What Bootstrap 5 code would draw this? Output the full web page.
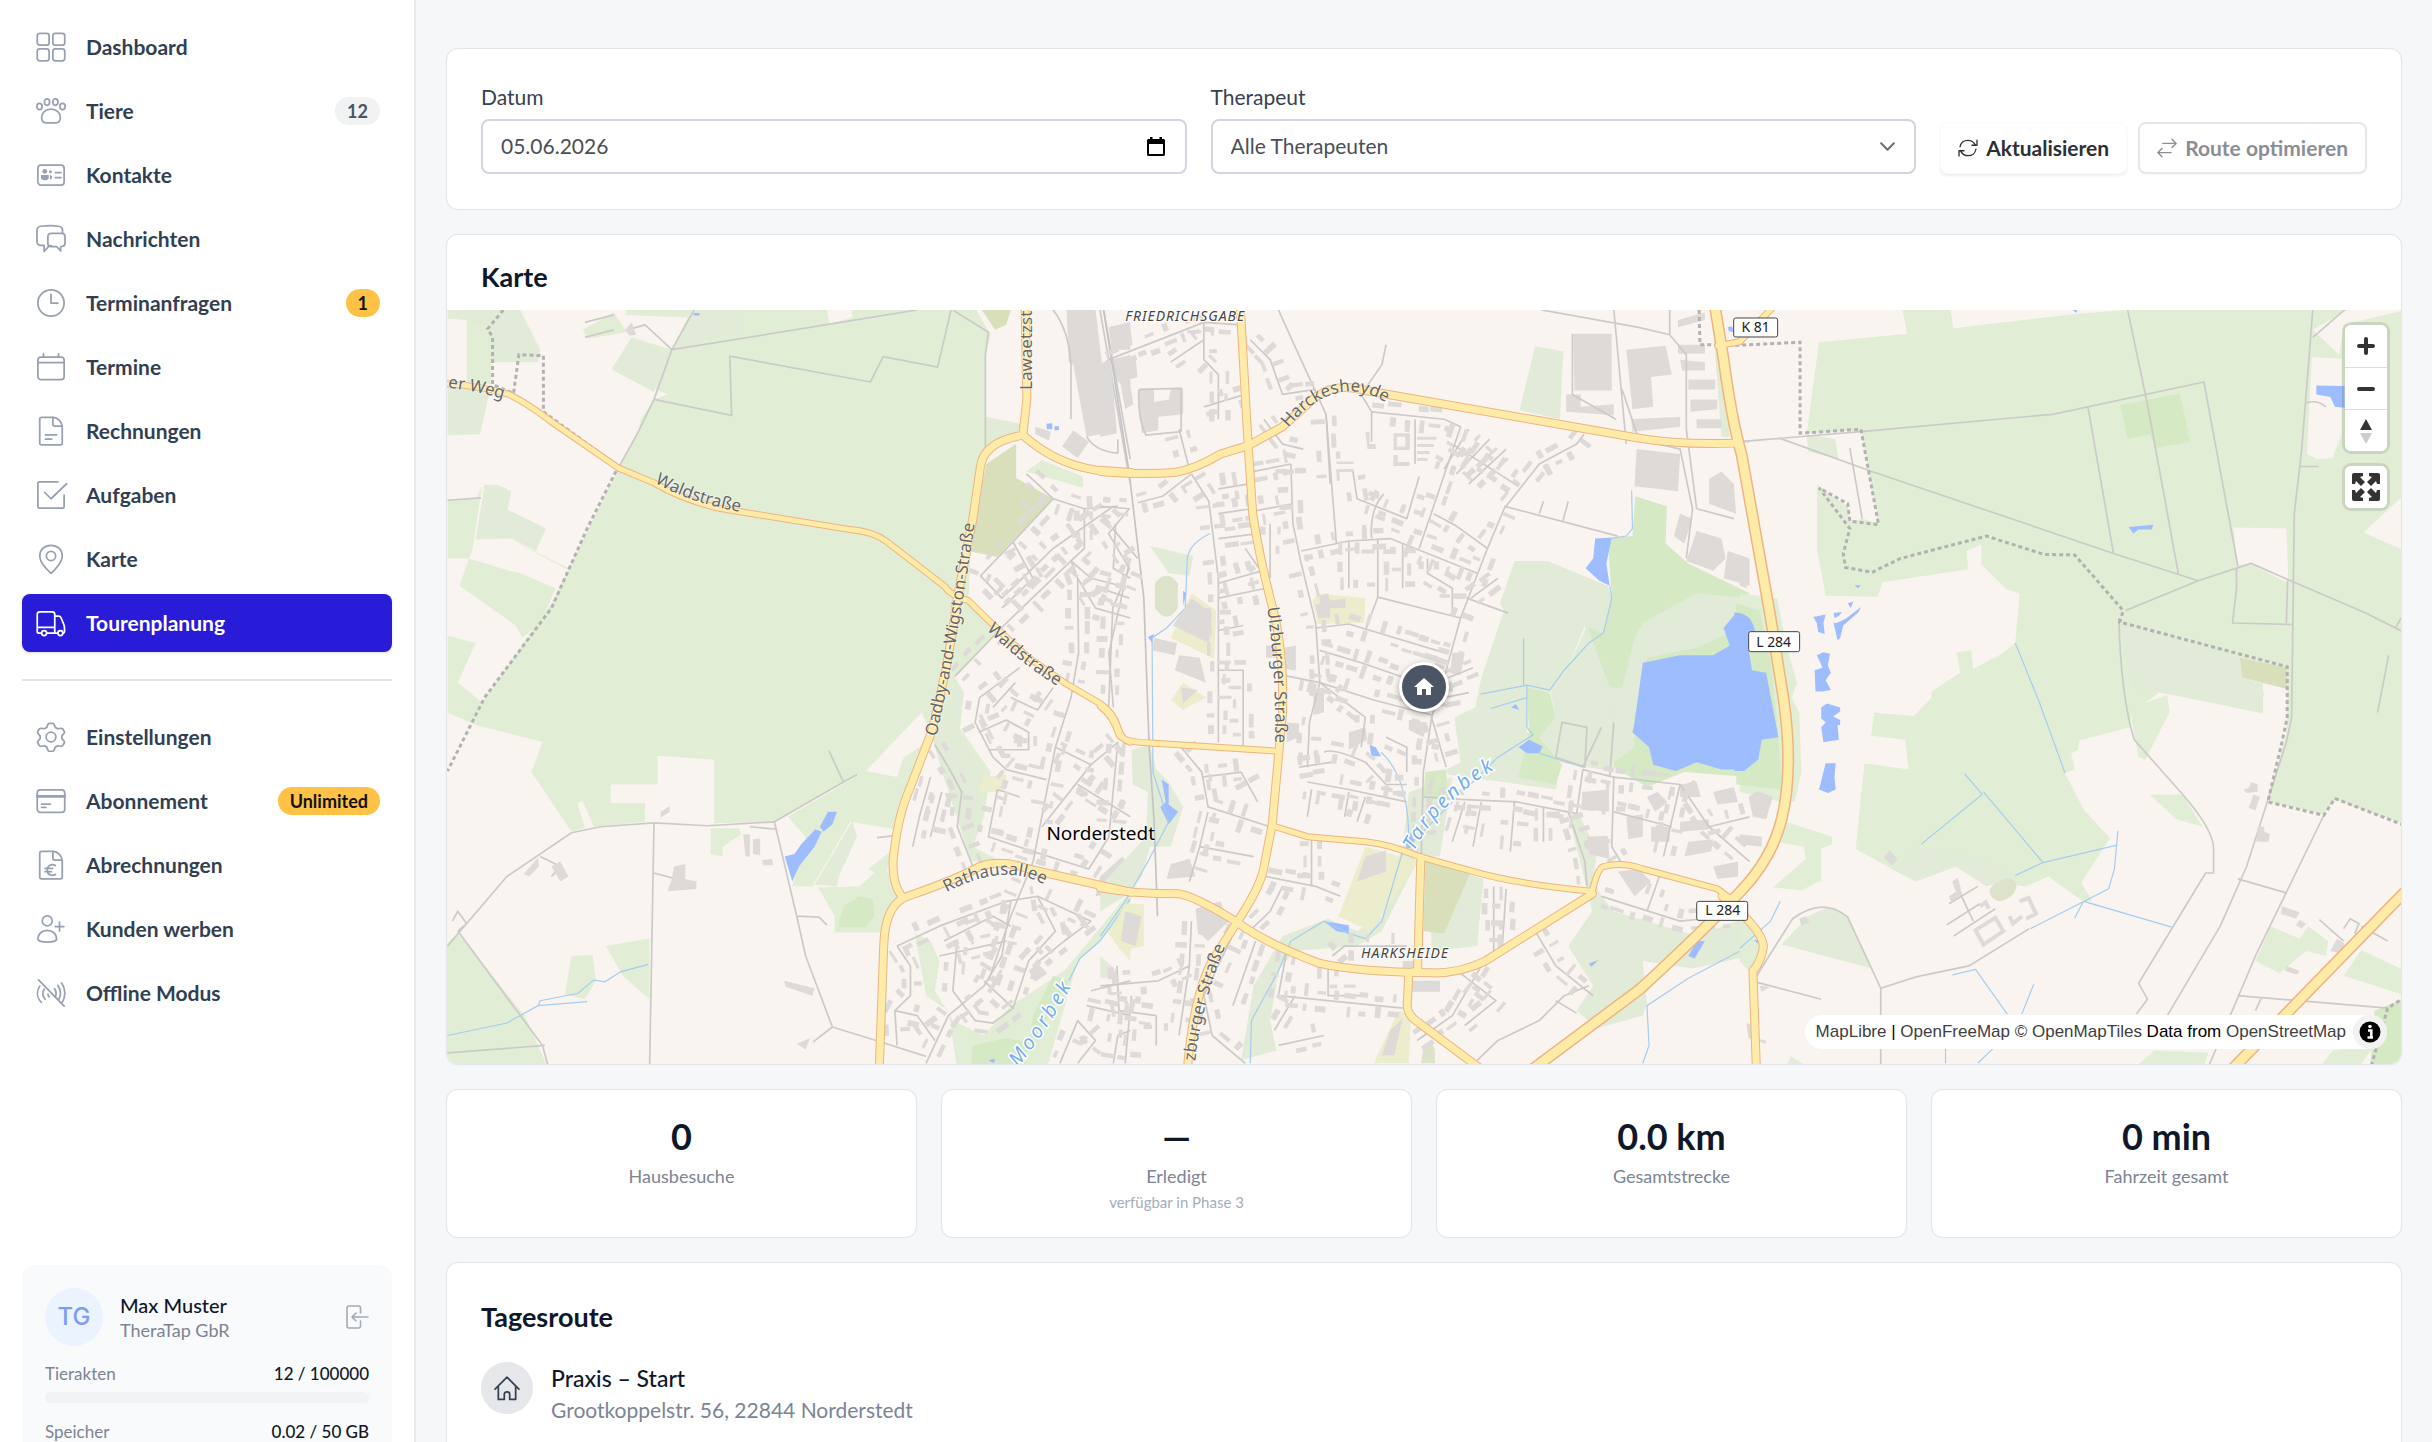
<!DOCTYPE html>
<html lang="de">
<head>
<meta charset="utf-8">
<meta name="viewport" content="width=device-width, initial-scale=1">
<title>Tourenplanung</title>
<link rel="stylesheet" href="https://cdn.jsdelivr.net/npm/bootstrap@5.3.0/dist/css/bootstrap.min.css">
<script src="https://cdn.jsdelivr.net/npm/bootstrap@5.3.0/dist/js/bootstrap.bundle.min.js"></script>
<style>
body{font-family:Lato,"Noto Sans",sans-serif;background:#f6f7f9;color:#0f172a;font-size:20px;line-height:28px}
.shell{height:100vh;overflow:hidden}
.side{width:416px;flex:none;background:#fff;border-right:2px solid #e5e7eb;padding:18px 22px 0;overflow:hidden}
.side-nav{gap:6px;flex:none}
.side-nav .nav-link{display:flex;align-items:center;height:58px;padding:0 12px 0 14px;border-radius:8px;color:#323f53;font-weight:700;font-size:21px}
.side-nav .nav-link svg{width:30px;height:30px;margin-right:20px;flex:none;color:#98a1b3}
.side-nav .nav-link.active{background:#281cd9;color:#fff;box-shadow:0 1px 3px rgba(0,0,0,.15)}
.side-nav .nav-link.active svg{color:#fff}
.ico{fill:none;stroke:currentColor;stroke-width:1.4;stroke-linecap:round;stroke-linejoin:round}
.ico-bold{stroke-width:1.6}
.pill{margin-left:auto;border-radius:14px;height:28px;line-height:28px;padding:0 12px;font-size:18px;font-weight:700;background:#f1f2f4;color:#4b5563}
.pill-amber{background:#ffc146;color:#111}
.side-rule{border-top:2px solid #e2e4e9;margin:27px 0;flex:none}
.usage{margin-top:243px;background:#f9fafb;border-radius:12px;padding:23px;flex:none}
.avatar{width:58px;height:58px;border-radius:50%;background:#ebf3ff;color:#7f9cf5;font:500 24px/58px Inter,sans-serif;text-align:center;margin-right:17px;flex:none}
.usage small{font-size:18px;line-height:24px;color:#7c8494}
.meter-row{font-size:17px;line-height:24px;color:#7c8494}
.who{font-size:20px;line-height:26px;font-weight:500;color:#0f172a}
.meter-row b{font-weight:500;color:#0f172a}
.meter{height:11px;border-radius:6px;background:#f2f3f5;margin:6px 0 17px}
.icon-btn{border:0;background:none;padding:0;line-height:0;color:#a3abb8}
.stage{padding:48px 30px 0;gap:24px;overflow:auto;scrollbar-width:none}
.stage>*{flex:none}
.stats{gap:24px}
.panel{background:#fff;border:1px solid #e4e6ec;border-radius:12px;box-shadow:0 0 1px #e4e6ec}
.panel h2{font-size:27px;line-height:32px;font-weight:700;margin:0}
.filters{padding:34px 34px 35px;gap:24px}
.filters label{font-size:21px;line-height:28px;margin-bottom:8px;display:block;color:#374151}
.filters .form-control,.filters .form-select{height:55px;border:2px solid #d1d5de;border-radius:8px;font-size:21px;padding:0 18px 2px;color:#4b4f57;background-color:#fff}
.filters .form-select{background-image:url("data:image/svg+xml,%3csvg xmlns='http://www.w3.org/2000/svg' viewBox='0 0 16 16'%3e%3cpath fill='none' stroke='%236b7280' stroke-width='2' stroke-linecap='round' stroke-linejoin='round' d='M2 5l6 6 6-6'/%3e%3c/svg%3e");background-size:17px 17px;background-position:right 18px center}
.date-btn{position:absolute;right:22px;top:18px;color:#000}
.acts{gap:11px}
.act{height:52px;border-radius:8px;font-size:21px;font-weight:700;color:#2d3036;background:#fff;padding:0 17px;border:1px solid #fbfbfb;box-shadow:0 2px 3px rgba(0,0,0,.07);display:flex;align-items:center;gap:8px}
.act-off,.act-off:disabled{border:2px solid #e5e7eb;color:#8a8e96;box-shadow:0 1px 2px rgba(0,0,0,.04);opacity:1}
.map-head{padding:26px 34px 17px}
.map-box{position:relative;border-radius:0 0 11px 11px;overflow:hidden}
.map-box>svg{display:block;width:100%;height:auto}
.ctl{position:absolute;right:14px;width:42px;border-radius:6px;background:#fff;box-shadow:0 0 0 3px rgba(0,0,0,.1);overflow:hidden}
.ctl-zoom{top:15px}.ctl-full{top:156px}
.ctl button{display:block;width:42px;height:42px;border:0;padding:0;background:#fff;line-height:0}
.ctl button+button{border-top:1px solid #ddd}
.credit{position:absolute;right:14px;bottom:15px;height:34px;border-radius:17px;background:#fff;padding-left:11px;font:17px/34px "Liberation Sans",Arial,sans-serif;color:#000}
.credit a{color:#404040;text-decoration:none}
.credit button{width:34px;height:34px;border-radius:50%;background:#f2f2f2;border:0;padding:0;line-height:0;margin-left:7px}
.home-pin{position:absolute;left:50%;top:50%;width:50px;height:50px;margin:-25px;border-radius:50%;background:#4b5565;border:3px solid #fff;box-shadow:0 2px 6px rgba(0,0,0,.35)}
.stat{padding:24px 24px 21px;height:149px}
.stat strong{display:block;font-size:36px;line-height:44px;font-weight:700}
.stat span{display:block;font-size:18px;line-height:24px;color:#7c8494;margin-top:6px}
.stat em{display:block;font-style:normal;font-size:15px;line-height:20px;color:#a5adba;margin-top:4px}
.route{padding:38px 34px 60px}
.stop{margin-top:29px}
.stop-ico{width:52px;height:52px;border-radius:50%;background:#e5e7eb;color:#374151;margin-right:18px}
.stop-name{font-size:23px;line-height:32px;font-weight:500}
.stop-addr{font-size:21px;line-height:32px;color:#7c8494}

/* map layers */
.tile path,.tile polygon{vector-effect:non-scaling-stroke}
.wood{fill:#e1eed5}.meadow{fill:#e1ebd7}.park{fill:#d5e9c5}.field{fill:#d9dfbb}.school{fill:#ecedcc}.pitch{fill:#dde2cb}.land{fill:#faf4f1}
.water{fill:#9ebdff}
.bld{fill:#dddad8}
.river{fill:none;stroke:#a5cdef;stroke-width:1.2}
.lane{fill:none;stroke:#cccac8;stroke-width:1.7;stroke-linejoin:round}
.border-line{fill:none;stroke:#b3b1b1;stroke-width:3;stroke-dasharray:4 3}
.case{--tone:#ecb480;--w:7px;--ww:9px;--wm:12px}
.core{--tone:#ffeba8;--w:5px;--ww:7px;--wm:9px}
.road path{fill:none;stroke:var(--tone);stroke-width:var(--w);stroke-linejoin:round;stroke-linecap:round}
.road .wide{stroke-width:var(--ww)}.road .major{stroke-width:var(--wm)}
.mt{font-family:"Noto Sans",sans-serif;fill:#666;stroke:rgba(255,255,255,.6);stroke-width:1.5;paint-order:stroke;font-size:17px}
.mt-river{fill:#74aeef;font-style:italic;font-size:20px;letter-spacing:3px;stroke:#fff;stroke-width:3}
.mt-area{fill:#444;font-style:italic;font-size:14px;letter-spacing:1px;stroke:#fff;stroke-width:2}
.mt-city{fill:#000;font-size:19px}
.sh rect{fill:#fff;stroke:#444;stroke-width:1}
.sh text{font-family:"Noto Sans",sans-serif;font-size:14px;fill:#222;text-anchor:middle}
</style>
</head>
<body>
<div class="shell d-flex">
<aside class="side d-flex flex-column">
<nav class="nav flex-column flex-nowrap side-nav">
<a class="nav-link" href="#"><svg class="ico" viewBox="0 0 24 24"><rect x="1" y="1" width="9.500" height="9.500" rx="2"/><rect x="13.500" y="1" width="9.500" height="9.500" rx="2"/><rect x="1" y="13.500" width="9.500" height="9.500" rx="2"/><rect x="13.500" y="13.500" width="9.500" height="9.500" rx="2"/></svg>Dashboard</a>
<a class="nav-link" href="#"><svg class="ico" viewBox="0 0 24 24"><ellipse cx="2.800" cy="8.300" rx="2.100" ry="2.500"/><ellipse cx="8.800" cy="4.800" rx="2.100" ry="2.600"/><ellipse cx="15.500" cy="4.800" rx="2.100" ry="2.600"/><ellipse cx="21.200" cy="8.300" rx="2.100" ry="2.500"/><path d="M12 10.500c4.500 0 7.500 3 7.500 6.800 0 2.600-1.500 4.200-4 4.200h-7c-2.500 0-4-1.600-4-4.200 0-3.800 3-6.800 7.500-6.800z"/></svg>Tiere<span class="pill">12</span></a>
<a class="nav-link" href="#"><svg class="ico" viewBox="0 0 24 24"><rect x="1.500" y="4" width="21" height="16" rx="2.500"/><g fill="currentColor" stroke="none"><circle cx="7" cy="9" r="1.900"/><path d="M4 12h6.200v2.200c0 1.300-1 2-3.100 2s-3.100-.7-3.100-2z"/><circle cx="11.500" cy="9.300" r="1.200"/><path d="M11.200 12c2 0 2.300 3.300 0 3.600z"/></g><path d="M15.500 10h4.500M15.500 14h4.500"/></svg>Kontakte</a>
<a class="nav-link" href="#"><svg class="ico" viewBox="0 0 24 24"><path d="M12.500 17.500H10.500L6.500 22v-5H4c-2 0-3.200-1-3.200-3V5c0-2 1.200-3 3.200-3.200 5-.6 10-.6 14 0 2 .2 3.200 1 3.200 3v2.500"/><path d="M12.500 7.500h8c1.700 0 2.700.9 2.700 2.500v5.500c0 1.500-1 2.300-2.700 2.500h-.8v3.500L16.500 18h-4.300c-1.700 0-2.700-.9-2.700-2.500V10c0-1.600 1.200-2.500 3-2.500z"/></svg>Nachrichten</a>
<a class="nav-link" href="#"><svg class="ico" viewBox="0 0 24 24"><circle cx="12" cy="12" r="10.500"/><path d="M12 5v7h5.500"/></svg>Terminanfragen<span class="pill pill-amber">1</span></a>
<a class="nav-link" href="#"><svg class="ico" viewBox="0 0 24 24"><rect x="1.500" y="4" width="21" height="18" rx="2.500"/><path d="M1.500 8.500h21M6 1.500V4M18 1.500V4"/></svg>Termine</a>
<a class="nav-link" href="#"><svg class="ico" viewBox="0 0 24 24"><path d="M13.500 1H4.500c-.9 0-1.500.6-1.500 1.500v19c0 .9.600 1.500 1.500 1.500h15c.9 0 1.500-.6 1.500-1.500V9C21 5 17.500 1 13.500 1z"/><path d="M13.500 1v5.500c0 1 .5 1.500 1.500 1.500h6M7.500 15h9M7.500 18.500h5"/></svg>Rechnungen</a>
<a class="nav-link" href="#"><svg class="ico overflow-visible" viewBox="0 0 24 24"><path d="M17.500 1.500H2.700c-.8 0-1.200.5-1.200 1.200v18.600c0 .8.500 1.200 1.200 1.200h18.600c.8 0 1.200-.5 1.200-1.200V12"/><path d="M7 10l5 5L24.500 3"/></svg>Aufgaben</a>
<a class="nav-link" href="#"><svg class="ico" viewBox="0 0 24 24"><path d="M12 23.500C9 21 3 14.500 3 9.500 3 4.500 7 1 12 1s9 3.500 9 8.500c0 5-6 11.500-9 14z"/><circle cx="12" cy="9.500" r="3.700"/></svg>Karte</a>
<a class="nav-link active" aria-current="page" href="#"><svg class="ico" viewBox="0 0 24 24"><path d="M4 20H2c-.7 0-1-.3-1-1V5c0-1.200.7-2 2-2h10c1.200 0 2 .8 2 2v15H9M15 6.500h3c1 0 1.600.4 2 1.300l2.200 5.200c.5 1.200.6 2 .6 3V19c0 .7-.3 1-1 1M1 15.500h14"/><circle cx="6.500" cy="20" r="2"/><circle cx="19.500" cy="20" r="2"/><path d="M15 20h2"/></svg>Tourenplanung</a>
</nav>
<div class="side-rule"></div>
<nav class="nav flex-column flex-nowrap side-nav">
<a class="nav-link" href="#"><svg class="ico" viewBox="0 0 24 24"><path d="M9.600 1.700c.3-.5.700-.7 1.200-.7h2.400c.5 0 .9.200 1.200.7l1 2.600 2 1.100 2.700-.4c.6 0 1 .2 1.300.6l1.200 2c.2.500.2 1-.1 1.400l-1.800 2.100v2.200l1.800 2.100c.3.400.3.900.1 1.400l-1.200 2c-.3.400-.7.600-1.300.6l-2.700-.4-2 1.100-1 2.600c-.3.500-.7.700-1.200.7h-2.400c-.5 0-.9-.2-1.200-.7l-1-2.600-2-1.100-2.700.4c-.6 0-1-.2-1.300-.6l-1.200-2c-.2-.5-.2-1 .1-1.400l1.800-2.100v-2.200L1.500 9c-.3-.4-.3-.9-.1-1.400l1.200-2c.3-.4.700-.6 1.300-.6l2.700.4 2-1.100z"/><circle cx="12" cy="12" r="3.900"/></svg>Einstellungen</a>
<a class="nav-link" href="#"><svg class="ico" viewBox="0 0 24 24"><rect x="1" y="3" width="22" height="18" rx="2.500"/><path d="M1 8.200h22" stroke-width="2.200"/><path d="M4.500 14.500h7M4.500 17h3.500"/></svg>Abonnement<span class="pill pill-amber">Unlimited</span></a>
<a class="nav-link" href="#"><svg class="ico" viewBox="0 0 24 24"><path d="M13.500 1H4.500c-.9 0-1.500.6-1.500 1.500v19c0 .9.600 1.500 1.500 1.500h15c.9 0 1.500-.6 1.500-1.500V9C21 5 17.500 1 13.500 1z"/><path d="M13.500 1v5.500c0 1 .5 1.500 1.500 1.500h6M15.500 12.500c-3-1.800-6.500-.3-6.500 3.500s3.500 5.300 6.500 3.500M7.300 14.700h6M7.300 17.300h5"/></svg>Abrechnungen</a>
<a class="nav-link" href="#"><svg class="ico" viewBox="0 0 24 24"><circle cx="9" cy="5.500" r="4"/><path d="M1.500 20c0-4 3.300-7 7.500-7s7.500 3 7.500 7c0 1.500-3.500 2.500-7.500 2.500S1.500 21.500 1.500 20zM18.800 6.500v7M15.300 10h7"/></svg>Kunden werben</a>
<a class="nav-link" href="#"><svg class="ico" viewBox="0 0 24 24"><path d="M2 1.500l20.500 21M3 6.500c-2.700 4-2.500 9 1.200 13M6.500 9c-1.500 2.700-1.200 5.700.8 8M9.500 13c.1.800.4 1.500 1 2M20.500 4c3.300 4.600 3.300 11 .5 15.500M17.500 6c2.500 3.500 2.600 7.500.8 11M14.800 8.500c1.400 2 1.600 4 .9 6"/></svg>Offline Modus</a>
</nav>
<section class="usage">
<div class="d-flex align-items-center">
<div class="avatar">TG</div>
<div class="flex-grow-1"><div class="who">Max Muster</div><small class="d-block">TheraTap GbR</small></div>
<button class="icon-btn" type="button" aria-label="Abmelden"><svg class="ico ico-bold" width="24" height="24" viewBox="0 0 24 24"><path d="M15.500 8V3c0-1.200-.8-2-2-2H4C2.800 1 2 1.800 2 3v18c0 1.200.8 2 2 2h9.500c1.200 0 2-.8 2-2v-5M23 12H7.500M11 8l-4 4 4 4"/></svg></button>
</div>
<div class="meter-row d-flex justify-content-between mt-3"><span>Tierakten</span><b>12 / 100000</b></div>
<div class="meter"></div>
<div class="meter-row d-flex justify-content-between"><span>Speicher</span><b>0.02 / 50 GB</b></div>
<div class="meter"></div>
</section>
</aside>

<main class="stage d-flex flex-column flex-grow-1">
<form class="panel filters d-flex align-items-end">
<div class="flex-fill w-50"><label for="datum">Datum</label><div class="position-relative"><input class="form-control" id="datum" type="text" value="05.06.2026"><button class="icon-btn date-btn" type="button" aria-label="Kalender"><svg width="18" height="19" viewBox="0 0 18 19"><path fill="currentColor" d="M3 0h2.500v2h7V0H15v2h1.500c.8 0 1.500.7 1.500 1.500v14c0 .8-.7 1.500-1.500 1.500h-15C.7 19 0 18.300 0 17.500v-14C0 2.700.7 2 1.500 2H3zM2 7v10h14V7z"/></svg></button></div></div>
<div class="flex-fill w-50"><label for="therapeut">Therapeut</label><select class="form-select" id="therapeut"><option>Alle Therapeuten</option></select></div>
<div class="acts d-flex flex-shrink-0">
<button class="act text-nowrap" type="button"><svg class="ico ico-bold" width="20" height="20" viewBox="0 0 24 24"><path d="M2.500 10.500C3.300 6 7 2.800 11.800 2.800c4 0 7.200 2 9 5.500M22.800 2.500v6.200h-6.100M21.500 13.500c-.8 4.500-4.500 7.700-9.300 7.700-4 0-7.200-2-9-5.500M1.200 21.500v-6.200h6.100"/></svg>Aktualisieren</button>
<button class="act act-off text-nowrap" type="button" disabled><svg class="ico ico-bold" width="20" height="20" viewBox="0 0 24 24"><path d="M7 6.500h16M18 1.500l5 5-5 5M17 17.500H1M6 12.500l-5 5 5 5"/></svg>Route optimieren</button>
</div>
</form>

<section class="panel">
<div class="map-head"><h2>Karte</h2></div>
<div class="map-box">
<svg viewBox="446 310 1956 755" role="img" aria-label="Karte von Norderstedt">
<defs>
<g id="roads" class="road">
<g class="tile" transform="translate(430 300) scale(.44643 .49745)">
<path d="M30 168Q110 172 175 190Q220 210 270 245L420 338 500 368Q560 400 640 418L720 430 940 462Q990 466 1020 485L1150 575Q1165 595 1205 605Q1290 680 1340 720L1420 770 1500 812Q1530 830 1540 860Q1548 885 1568 890"/>
<path class="wide" d="M1332 0L1336 200 1327 272Q1240 285 1232 335L1215 440 1180 600Q1160 740 1122 870L1075 980Q1045 1040 1036 1130Q1035 1180 1058 1202"/>
<path class="wide" d="M1327 272Q1400 330 1490 342L1570 347"/>
<path class="wide" d="M1005 1550L1015 1300Q1018 1210 1075 1198Q1180 1165 1230 1140Q1280 1125 1340 1145L1570 1192"/>
</g>
<g class="tile" transform="translate(1100 300) scale(.41454 .49745)">
<path d="M0 818Q30 835 45 875Q55 890 130 892L432 908M415 1058L500 1080 640 1090Q700 1095 770 1120L900 1150Q1000 1175 1188 1190Q1200 1145 1215 1140Q1260 1130 1310 1145L1490 1185 1530 1210"/>
<path class="wide" d="M774 1122L766 1350M745 1354L741 1420Q742 1440 770 1455L915 1545M745 1354L766 1350"/>
<path class="wide" d="M0 345Q100 352 180 347Q230 340 290 310L357 293 440 255 520 195Q570 165 640 182L1060 243 1300 278Q1400 292 1530 288M337 0L357 293 368 430Q380 500 410 600Q445 700 440 830L415 1055 393 1150Q380 1190 330 1252L270 1330Q225 1400 210 1550M0 1183Q80 1195 190 1195Q230 1200 330 1252Q400 1295 530 1335Q620 1352 800 1354Q870 1355 930 1330L1188 1195"/>
</g>
<g class="tile" transform="translate(1740 300) scale(.44130 .49745)">
<path d="M-50 92L0 84 75 15"/>
<path class="wide" d="M-40 1200Q50 1265 54 1300Q50 1330 30 1350L38 1550"/>
<path class="major" d="M1115 1550L1510 1190"/>
</g>
<path class="major" d="M1715 305L1724 360Q1732 420 1742 455L1771 618 1784 700Q1794 770 1782 820Q1772 860 1740 893Q1700 935 1640 990L1530 1072"/>
</g>
</defs>
<rect class="land" x="446" y="310" width="1956" height="755"/>

<!-- western sheet: fields, forest, Moorbek -->
<g class="tile" transform="translate(430 300) scale(.44643 .49745)">
<path class="wood" d="M440 0H1210L1255 70 1243 110V310L1232 335 1215 440 1205 600 1270 670 1175 760 1195 790 1185 860 1255 950 1240 1040 1215 1100 1280 1130 1210 1130 1150 960 1120 870 1100 830 975 948 870 1000 770 1050 635 1053V925L508 917V975H403V1012H480V1050L365 1060 340 1008 328 1012 345 1062 315 1070 225 950 250 890 100 855 115 810 270 610 420 340 465 265 470 240 500 200 530 190 405 140 450 75 540 100 575 35 437 30z"/>
<path class="meadow" d="M37 37L80 40 130 60 135 125H240L245 100 200 20H37zM450 75L540 115 500 185 405 140zM590 25L700 0 700 60 545 100zM120 372H150L180 385 172 422 258 460 235 505 180 480 100 482zM130 190L110 270 37 272V160zM1243 235L1327 250 1300 285 1243 305zM1160 850L1120 870 1150 960 1210 1110 1240 960 1185 870 1195 790 1175 760z"/>
<path class="wood" d="M80 40L135 62V170L80 165zM37 402L100 400 115 375 92 505 85 520H37zM85 520L175 545 200 550 280 580 245 650 205 680 190 655 64 575zM175 480L320 545 300 540zM37 675L100 690 60 770 115 810 100 855 37 830zM340 60L410 25 440 65 350 78zM627 1063H690L695 1075 655 1100 653 1120 627 1115zM800 1040L975 948 1045 960 1060 920 1095 900 1120 870 1075 980 1040 1065 940 1050 910 1180H810L840 1080zM868 1182L960 1180 1010 1140 1035 1160 1058 1202 1015 1240V1273H905V1240zM980 1145L1030 1110 1020 1165zM60 1275L210 1440 265 1550H30V1300zM315 1320L362 1318 370 1370 345 1407 300 1397zM392 1300L490 1285V1407L430 1360zM1085 1275L1120 1290 1140 1330 1130 1390 1170 1450 1240 1480 1300 1420 1420 1350 1568 1190V1230L1450 1330 1380 1550H1180L1160 1430 1110 1400zM1335 345L1370 322 1462 355V378z"/>
<path class="land" d="M885 0L893 48 945 35 940 0zM855 1180L940 1050 955 1090 895 1180z"/>
<path class="meadow" d="M860 1177L945 1048 955 1080 905 1178z"/>
<path class="park" d="M912 1262L925 1220 960 1200 990 1205 994 1240 975 1262zM1215 1500L1290 1485 1350 1495 1430 1370 1395 1360 1350 1440 1330 1550H1210z"/>
<path class="field" d="M1245 330L1312 290V358L1395 400 1270 517 1205 505zM1235 20H1300L1290 50 1265 60z"/>
<path class="school" d="M1235 960L1290 955 1285 990 1230 990zM1530 1270L1568 1220V1330L1540 1300z"/>
<path class="water" d="M872 1060L890 1030 910 1030 900 1055 880 1070zM793 1120L815 1115 830 1095 862 1065 876 1070 860 1100 825 1140 810 1170zM1380 249L1393 248 1393 260 1381 260zM1398 254H1408V262H1398zM588 26H602V31H590zM1250 1530L1265 1527 1262 1536z"/>
<path class="river" d="M37 1480L170 1455 240 1420 350 1412M240 1420L245 1410 330 1395 365 1368 390 1372 425 1352 487 1337M1568 1205L1500 1290 1455 1325 1430 1370"/>
<path class="lane" d="M590 20L540 100 500 200 465 265 420 338M540 100L1090 20M500 200L674 232 670 113 985 165 1014 114 1136 135 1166 20M1170 20L1250 65 1243 110V310M37 403L112 398M540 100L480 50 440 60M345 75L410 60M345 45L410 30M37 1300L170 1160 315 1072 380 1060 500 1052 620 1058 770 1050 925 970 955 955M925 970L892 907M500 1052L490 1550M500 1153L570 1170M60 1270L250 1500 265 1550M37 1515L255 1500M770 1050L820 1240 840 1320 900 1463 998 1490M820 1240L870 1242 888 1258M900 1463L857 1493M998 1490L1110 1522M245 1120L290 1140 270 1160M48 1250L60 1230 80 1255 60 1270M1000 1082L1040 1078M715 1060L775 1065"/>
<path class="border-line" d="M162 20L127 58 138 75V170L185 188 197 110 252 112V225L420 335 350 460 270 620 120 800 37 948"/>
<path class="bld" d="M1425 20H1490L1505 130 1532 265 1470 275 1440 130 1430 125zM1520 55L1568 45V100L1530 100zM1525 120L1568 110V170L1540 165zM1440 262L1475 285 1450 318 1415 295zM1355 255L1390 265 1385 282 1355 270zM270 1140L290 1130 308 1160 290 1170zM208 1155L240 1122 242 1140 220 1160zM545 1140L570 1135 570 1165 595 1170 595 1185 530 1190 540 1165zM722 1085L738 1083 738 1118 722 1115zM700 1075L715 1075 715 1120 705 1120zM742 1127L765 1125 767 1137 745 1138zM515 1030L535 1018 535 1030 515 1042zM792 1370L860 1385 855 1400 795 1382zM820 1497L850 1485 840 1508zM435 60L450 45 460 70 445 72zM1500 1160L1550 1120 1568 1140V1190L1490 1200zM1540 1250L1568 1240V1310L1545 1290zM1325 402L1338 408 1330 420 1320 412zM1340 1350L1360 1335 1382 1355 1355 1372z"/>
<g class="lane">
<path class="hs" d="M1395 400L1305 487 1232 555 1280 600 1395 500 1530 415"/><path class="hs" d="M1395 400L1360 370 1335 350M1395 400L1465 420 1540 415"/>
<path class="hs" d="M1465 420V500L1435 525 1450 560 1452 710 1435 800 1400 900 1350 1130 1300 1240 1250 1370"/>
<path class="hs" d="M1175 757L1290 650 1435 525 1480 560 1568 580"/><path class="hs" d="M1305 487L1350 560 1280 620"/><path class="hs" d="M1450 560L1490 620 1568 640"/>
<path class="hs" d="M1320 740L1230 800 1220 850 1260 920 1290 945 1380 965"/><path class="hs" d="M1228 870L1290 845 1340 870 1340 905 1250 905"/><path class="hs" d="M1260 820L1310 770"/><path class="hs" d="M1300 800L1360 825 1395 780"/>
<path class="hs" d="M1400 900L1480 935 1540 890M1480 935L1370 1060"/><path class="hs" d="M1450 975L1568 1040"/><path class="hs" d="M1540 890L1520 1080 1475 1145 1350 1110"/>
<path class="hs" d="M1130 895L1160 940 1190 990 1180 1060 1215 1140"/><path class="hs" d="M1120 960L1095 1040 1080 1100"/><path class="hs" d="M1145 990L1120 1080"/><path class="hs" d="M1270 985L1250 1080 1350 1110M1270 985L1320 1000"/>
<path class="hs" d="M1045 1300L1140 1260 1290 1210 1360 1200 1480 1250"/><path class="hs" d="M1150 1290L1260 1240 1300 1260M1140 1320L1290 1290"/><path class="hs" d="M1300 1210L1280 1320 1240 1380 1160 1440 1110 1536"/><path class="hs" d="M1240 1370L1305 1425 1260 1455 1220 1450 1170 1390 1180 1290"/><path class="hs" d="M1045 1300L1075 1340V1400L1040 1430 1045 1500"/><path class="hs" d="M1040 1430L1090 1440 1130 1490"/><path class="hs" d="M1360 1200L1400 1270 1340 1330 1305 1425"/><path class="hs" d="M1480 1250L1420 1290 1350 1340"/>
<path class="hs" d="M1410 1536L1450 1450 1490 1490 1450 1536"/><path class="hs" d="M1470 1420L1568 1440M1480 1390L1568 1370"/><path class="hs" d="M1530 1536L1540 1480 1568 1470"/>
<path d="M1395 20Q1430 60 1435 130L1435 240M1500 20L1568 370M1508 20L1568 320M1470 275Q1490 305 1540 308V280M1535 450L1530 540 1568 560M1568 520L1520 710 1530 820"/>
</g>
</g>

<!-- town sheet -->
<g class="tile" transform="translate(1100 300) scale(.41454 .49745)">
<path class="meadow" d="M1050 93L1118 103 1110 240 1012 222zM1080 525L1225 575 1235 600 1215 670 1170 655 1130 740 1087 790 1030 780 905 820 920 760 975 625 965 610 1000 525zM855 840L905 820 1030 780V870L1110 930 1100 985 840 955 835 945 870 930zM745 990L850 960 820 1120 770 1120 730 1100zM795 1125L925 1165 910 1300 800 1310zM1130 1035L1155 1035 1200 1110 1190 1165 1210 1200 1240 1230 1440 1280 1568 1240V1320L1430 1345 1310 1330 1320 1420 1150 1430 1190 1380 1130 1300 1188 1230zM1240 1410L1320 1415 1310 1440 1200 1465 1150 1430zM75 905L120 895 135 945 165 970 200 1020 170 1100 120 1100 100 1160 60 1200 0 1230V1320L40 1350 25 1365H0V1180L110 1080 115 990 78 975zM120 495L225 515 215 555 165 550zM440 1280L550 1245 620 1270 680 1240 700 1165 730 1100 765 1130 680 1270 620 1300 470 1310 430 1350 410 1450 425 1510 340 1530 370 1380z"/>
<path class="park" d="M1292 395L1368 415 1365 490 1420 530 1568 590V960L1410 950 1320 980 1240 940 1225 780 1170 655 1215 670 1235 600 1225 480 1285 475zM1030 780L1085 790 1100 840 1060 880 1115 935 1100 975 1010 960 1035 870zM785 950L835 945 840 1000H780z"/>
<path class="meadow" d="M1568 600V650L1440 700 1320 720 1290 840 1290 900 1240 930 1230 780 1260 780 1290 680 1310 650 1440 590zM1087 790L1130 740 1175 655 1230 780 1240 950 1110 930 1060 880 1100 840zM1480 60L1500 110 1520 275H1500z"/>
<path class="field" d="M785 1130L895 1150 830 1275 780 1270z"/>
<path class="school" d="M525 590L640 600 637 650 525 652 513 605zM220 590L280 625 275 722 170 680zM200 770L255 800 200 825 170 805zM640 1100L770 1130 650 1270 575 1240zM60 1215L105 1215V1300L50 1310 20 1275zM720 1430L750 1440 745 1536H660z"/>
<path class="pitch" d="M132 570Q160 540 187 570V620Q160 655 132 620zM780 1500Q800 1485 808 1510V1536H775z"/>
<path class="water" d="M1195 480L1235 478 1222 530 1230 575 1205 565 1172 540 1190 520zM1568 630L1530 635 1505 660 1520 695 1480 715 1400 715 1310 730 1290 850 1285 870 1325 900 1335 935 1390 948 1440 930 1500 945 1568 945zM1010 900L1035 885 1068 898 1060 912 1030 912zM650 895L665 900 678 918 655 918zM148 965L165 975 165 1015 188 1030 165 1055 145 1020 158 1010zM540 1250L600 1258 600 1275 570 1270zM1420 1320L1440 1290 1460 1290 1435 1325zM1180 1335L1203 1328 1185 1342zM115 678L130 672 125 690zM200 585L208 590 200 615zM740 1080L765 1060 755 1100 738 1105zM992 820L1003 813 1012 825zM1515 55L1525 53 1530 65 1518 63z"/>
<path class="river" d="M265 470Q215 490 210 520L205 620 160 660 125 680 127 950 165 1050 115 1130 60 1210 0 1280M1283 383L1285 460 1270 475 1230 480M1230 575L1235 600 1215 670 1180 690 1120 745 1085 785 1030 775 918 793M1030 775V860L1045 875 960 920 730 1110 680 1250 640 1285 600 1275 540 1250 460 1290 430 1350 365 1450 362 1536M1060 912L1165 940M678 910Q745 960 745 1090M943 822L1030 800M1022 680V775M1568 1300L1420 1365 1320 1420 1325 1500 1310 1536"/>
<path class="bld" d="M0 130L25 115 40 268 0 275zM20 55L70 45 78 90 28 105zM38 120L85 115 90 155 70 160 80 210 60 220zM92 180L130 178V205L165 200 170 180 200 178V230L140 235V262L100 268zM1142 68H1235V182H1145zM1270 100L1365 92 1380 150 1330 155 1335 215 1285 220zM1125 190H1160V215L1240 210V232L1125 225zM1282 240L1400 235V255L1285 265zM1295 300L1400 310 1395 385 1290 375zM1395 40L1460 25V40L1395 55zM1395 90H1460V108H1395zM1400 120L1460 125V142H1405zM1420 160H1485V180H1420zM1425 200H1490V220L1425 225zM1440 240H1500V258H1440zM1470 360L1500 345 1530 370 1535 430 1470 410zM1400 430L1430 440 1410 490 1385 475zM1440 465L1500 480 1510 520 1480 545 1415 525zM1515 505L1568 520V575L1505 560zM530 595L550 590 555 605 592 600V620H555V640H530zM220 600L270 630 262 690 175 655zM130 680L185 690 180 715 125 705zM190 715L240 720 255 770 180 745zM195 780L235 785 200 812zM445 700L472 695V740H450zM400 695H430V720H400zM450 850L480 852V880L450 890zM640 1120L690 1108V1150L620 1170zM170 1135L215 1125 230 1160 160 1165zM1165 990L1228 985V1030L1160 1025zM1175 1080L1225 1078 1230 1125 1180 1115zM1270 1040L1310 1035V1080L1275 1085zM1330 1060H1375V1090H1330zM1400 975L1440 970 1450 1000H1400zM1480 990L1530 980 1540 1010 1490 1015zM1320 1000L1345 990 1370 1010 1340 1030zM1400 1050L1470 1045V1065L1400 1070zM1420 1090L1480 1085 1475 1110 1410 1120zM1250 1150L1300 1145 1330 1170 1290 1200zM730 1330H765V1350H730zM600 870L640 860 645 885 600 905zM745 845L790 850 780 880 745 865zM515 785L540 780V830L515 835zM850 710H880L870 755 845 750zM1480 1140L1540 1130V1160L1490 1165zM60 1230L100 1240 85 1300 50 1290zM230 1225L290 1210 310 1250 260 1290 235 1270zM700 1470L730 1445 710 1520 680 1520zM750 1370H820V1392H750z"/>
<path class="bld" fill-rule="evenodd" d="M708 268H747V302H708zM716 275V295H739V275zM708 312H718V326H747V334H708zM765 275H812V281H765zM765 290H805V296H765zM765 304H795V310H765zM765 318H790V324H765zM640 265H650V290H665V300H645zM570 325H612V330H570zM570 340H612V346H570z"/>
<g class="lane">
<path class="hs" d="M250 20V120L285 150V240"/><path class="hs" d="M20 120L250 45 340 50"/><path class="hs" d="M250 80L170 125"/><path class="hs" d="M250 215L350 190M362 80L410 120 440 190 520 180"/><path d="M430 20L490 130 545 230 570 490M93 180Q90 240 110 272L195 265M95 180L195 178V265M690 90L680 130 630 190 655 225V285"/><path class="hs" d="M395 240L440 290 490 300"/>
<path class="hs" d="M545 230L555 370"/><path class="hs" d="M655 225L830 240 870 255 770 500"/><path class="hs" d="M760 240V330"/><path class="hs" d="M610 345L620 400 740 440 770 355"/><path class="hs" d="M655 480Q650 420 685 390M600 485V580M670 480V600"/><path class="hs" d="M460 330L465 450 485 530 520 650 530 770"/><path class="hs" d="M370 345L460 330M370 425L465 410"/>
<path class="hs" d="M485 505L600 485 700 480 910 550"/><path class="hs" d="M730 490V580"/><path class="hs" d="M790 520V550L850 580V630"/><path class="hs" d="M850 290L1010 375"/><path class="hs" d="M830 340L890 260M860 350L940 280M890 370L980 300"/><path class="hs" d="M805 430L860 455 935 500"/>
<path class="hs" d="M1168 270L1150 290 1060 330 975 420 930 510 870 640 830 760 800 840"/><path d="M975 415L1250 475M1070 405L1060 430M1130 405L1117 445M885 600L985 630M670 598L870 640M670 598L640 665M905 635"/><path class="hs" d="M895 600L960 560"/>
<path class="hs" d="M520 660L600 652 840 712"/><path class="hs" d="M530 705L630 730 735 760"/><path class="hs" d="M440 755L530 770 660 805 800 835"/><path class="hs" d="M530 770L505 850 500 940"/><path class="hs" d="M530 770L640 840 630 900"/><path class="hs" d="M840 760L900 740M830 800L890 790"/>
<path class="hs" d="M220 350L262 405 285 560V890"/><path class="hs" d="M285 380L360 370M285 430L365 420M285 480L380 470"/><path class="hs" d="M285 570L390 545M285 600L400 580"/><path class="hs" d="M285 745H345V900M285 665L345 655"/><path class="hs" d="M90 408L150 395 220 350"/><path class="hs" d="M190 260L215 340"/>
<path class="hs" d="M480 940L560 930M500 970L600 985 740 1010"/><path class="hs" d="M510 985L500 1040M600 990L590 1040M640 1000L620 1050M540 910Q560 900 640 930L690 975 740 975M690 880L740 900 740 950"/>
<path class="hs" d="M780 1000L870 1005 1005 1010 1160 1035"/><path class="hs" d="M880 1010L850 1090M920 1010L900 1100M1000 1010L990 1110M1070 1020V1090"/><path class="hs" d="M775 1120L780 950 800 840 835 940"/><path class="hs" d="M1130 1030L1170 1130 1175 1180"/><path class="hs" d="M1150 1035L1165 945 1240 960 1235 1100 1260 1135"/><path class="hs" d="M1240 960L1400 975 1360 1120"/><path class="hs" d="M1400 975L1470 1060 1568 1130"/><path class="hs" d="M1240 1030L1380 1060M1470 1060L1568 1040"/>
<path class="hs" d="M195 900L245 950 260 1020 410 1060"/><path class="hs" d="M245 960L340 950M340 950L380 1010"/><path class="hs" d="M260 1030L240 1100 215 1170"/><path class="hs" d="M240 1100L370 1120"/><path class="hs" d="M510 1080V1180M400 1160L520 1180 580 1200"/><path class="hs" d="M440 1180L410 1230 360 1270"/>
<path class="hs" d="M330 1260L250 1400 270 1480 350 1536"/><path class="hs" d="M375 1290L320 1420"/><path class="hs" d="M450 1310L430 1400 550 1410 730 1425"/><path class="hs" d="M550 1340V1400L640 1400"/><path class="hs" d="M560 1320L590 1300 740 1300"/><path class="hs" d="M220 1250L215 1340 140 1370 0 1380"/><path class="hs" d="M40 1340L45 1430 135 1440M75 1400L60 1536M135 1440V1500"/><path class="hs" d="M215 1340L190 1480"/>
<path class="hs" d="M765 1490L850 1440 920 1340M870 1355L955 1410 880 1460"/><path class="hs" d="M950 1180V1320M980 1185L970 1310"/><path class="hs" d="M1050 1270L1100 1340 1190 1400"/><path d="M910 1530L960 1490 1060 1450 1120 1400 1180 1380M1100 1410L1150 1435"/><path class="hs" d="M1210 1200L1400 1250 1520 1240M1350 1160L1320 1230"/>
<path class="hs" d="M0 415L70 420 20 470 70 540 30 620 20 820"/><path class="hs" d="M0 580L70 600M30 460L90 520"/><path class="hs" d="M410 450V560M350 500L400 560"/><path class="hs" d="M430 1500L540 1480M470 1400L420 1470"/>
<path d="M1065 20L1300 55 1375 70M1140 68V190L1245 240M1240 20L1270 290M1375 20V70L1415 110V260L1440 420M1260 180L1300 280 1400 300 1430 420 1415 520M1440 420L1530 440M1535 285H1568M1240 850L1230 960M1115 850L1175 860 1170 940 1100 920zM1210 860L1165 940"/>
<path d="M8 20L70 350 105 600 118 900 130 1050 138 1240" stroke="#c4c4c4"/>
</g>
</g>

<!-- eastern sheet: forests and farmland -->
<g class="tile" transform="translate(1740 300) scale(.44130 .49745)">
<path class="wood" d="M180 85L380 68 365 0H475L485 57 760 28 880 20H1510V1055L1350 1005 1325 1035 1200 1010 1240 870 1242 740 1135 720 1140 760 1190 790 1180 830 960 785 890 830 885 860 770 887 768 905 752 912 760 945 738 952 780 1025 840 1083 775 1172 800 1210 775 1208 700 1160 650 1180 560 1170 490 1140 400 1170 345 1145 263 1105 283 932 383 945 375 885 298 877 305 830 395 837 435 800V788L500 750 492 710 525 705 530 742 595 712 625 690 635 590 605 582 548 532V492L515 505 518 542 325 568 312 597 195 595 175 500V370L280 440 315 450 275 262 152 268z"/>
<path class="wood" d="M930 995H1005L1050 1060 990 1045zM890 850L890 820 970 795 975 830 920 925 905 920zM105 1050L210 1080 210 1095 185 1105V1168L140 1188 75 1182 150 1125 145 1100 80 1090zM0 590L85 600 105 690 130 770 118 800 135 830 140 950 125 1010 95 1010 0 990zM1205 1260L1270 1285 1290 1260 1335 1290 1330 1320 1285 1310 1225 1355 1170 1330zM1410 1308L1510 1350V1400L1370 1360zM940 1510L1063 1515 1050 1550H890zM1345 1510L1440 1500 1400 1550H1310zM0 1240L55 1300 25 1355 0 1330zM115 1522L170 1550H105z"/>
<path class="meadow" d="M155 1240L200 1222 245 1240 300 1345 95 1297zM860 650L1140 715 1140 760 1187 772V832L1010 800 890 780zM152 270L220 280 225 320 155 305zM400 1100L500 1110 640 1160 560 1180 490 1140 400 1170 345 1145z"/>
<path class="park" d="M863 212L998 188 1022 285 945 298 930 270 880 280zM-8 610L45 625 70 720 88 880 95 985 -8 975zM1440 1430L1510 1405V1550H1430z"/>
<path class="field" d="M1135 720L1242 740V783L1140 760z"/>
<path class="pitch" d="M567 1190Q570 1172 610 1163 628 1165 628 1182 620 1205 590 1210 570 1208 567 1190z"/>
<path class="land" d="M217 280L275 265 310 435 250 445 245 410 180 375 230 350zM1120 458L1240 460 1245 570 1155 530 1130 535zM1298 115L1365 118V270L1345 318 1310 320 1287 310zM1415 468L1510 390V505zM1510 20H1380L1300 60 1360 110 1370 50z"/>
<path class="water" d="M-12 629L0 630Q30 635 35 670L20 700 28 745 60 750 88 880 50 885 42 925 10 948 -12 948zM167 638L195 633 190 650 193 672 178 668 175 650zM213 630L232 628 225 636 215 640zM220 650L240 642 275 618 270 628 235 655 228 680 222 685 213 650zM245 610L258 607 252 620zM261 574H275L268 580zM175 715L190 709 205 712 200 735 207 750 195 765 207 785 188 788H172L170 745 188 740zM185 820L198 812 228 820V828L212 838 228 845V855H222L225 885 190 890 185 860 195 850 185 842zM195 932H218L215 960 218 985 200 992 180 985zM1308 172L1372 173V217L1350 215 1340 195 1308 190zM882 457L938 452 935 462 905 462 893 470zM755 20H765V26zM33 1288H43L40 1295z"/>
<path class="river" d="M625 690L680 810 738 952M510 953L550 995 412 1095M553 990L688 1132 625 1158M688 1132L856 1097M858 1068L850 1145 837 1185 660 1265M760 1243L780 1210 980 1262M483 1358L535 1347 607 1437M667 1377L640 1437M467 1536V1500M540 1536L575 1506M92 1210L70 1250 0 1305"/>
<path class="lane" d="M0 285L275 265 710 230 1053 165 1130 535M880 20L925 210 995 550M790 215L848 510M90 278L300 345 848 510 1040 565 1160 530 1250 565 1420 630 1510 670M875 625L1040 565M860 640Q865 800 895 885L1000 990Q1080 1070 1075 1110V1153H1057L905 1375 925 1407 900 1437M1127 540V580L1118 650 1252 653M1243 565L1240 650M1300 20L1275 300 1258 430 1252 840 1240 890 1150 1140 1090 1260 970 1440M1300 75L1372 20M1285 207Q1310 200 1330 215M1270 335H1313M1472 715L1447 830M1325 1037L1170 1320 1060 1550M1130 1165L1240 1193M1130 1400L1470 1425M1183 1405L1170 1430M35 1365L120 1245Q190 1200 245 1242L320 1385V1550M320 1385L400 1362 520 1340 657 1265M35 1372L185 1407M250 298L278 440M1315 1247L1370 1290M1500 640L1488 660M475 1215L540 1180M470 1257L545 1215M485 1280L580 1225M490 1175L530 1250M1370 1265L1385 1245 1405 1255 1395 1275M1410 1260L1470 1290"/>
<path class="border-line" d="M-92 20L-90 90 0 91 137 85V268L275 260 315 452 250 445 245 410 180 378 250 460 235 510 240 538 300 548 365 520 560 475 690 512 760 513 870 625 862 648 1242 738V840L1230 890 1198 1010 1325 1037 1350 1003 1510 1058"/>
<path class="border-line" d="M1510 1402L1470 1425 1430 1550"/>
<path class="bld" d="M340 1107L358 1125 345 1138 327 1122zM482 1170L495 1162 502 1185 490 1190zM475 1200L500 1185 505 1195 480 1212zM1160 970L1175 975V990L1150 992 1143 985 1155 982zM1165 995L1180 1000 1170 1027 1155 1022zM1175 1060H1190V1070L1203 1075 1200 1090H1172zM1230 1220L1270 1232 1262 1245 1228 1235zM1270 1247L1285 1255 1275 1265 1262 1258zM1355 1285L1372 1295 1365 1315 1340 1310zM1240 1340L1270 1350 1265 1358 1236 1350zM15 1455L30 1460V1485L60 1490V1497L20 1485zM45 1380L70 1382 50 1392zM20 1000L40 988 75 1000 60 1045 30 1040zM0 1075L50 1080V1100L0 1095zM135 1245L150 1240 158 1252 140 1258zM0 510L20 560 15 580 0 575z"/>
<path d="M535 1268L580 1243 598 1270 553 1297zM635 1210L655 1203 672 1235 650 1245M612 1240L620 1255 640 1240M545 1220L558 1212 565 1225" fill="none" stroke="#dddad8" stroke-width="4"/>
</g>
<g id="houses" class="bld"></g>
<use href="#roads" class="case"/><use href="#roads" class="core"/>

<g fill="none">
<path id="p-weg" d="M447 388Q472 390 506 400"/><path id="p-wald1" d="M654 483Q690 504 750 514"/><path id="p-oadby" d="M936 737Q958 640 974 524"/>
<path id="p-wald2" d="M986 630Q1025 668 1060 688"/><path id="p-rath" d="M946 893Q1000 864 1040 883"/><path id="p-moor" d="M1018 1068Q1048 1030 1078 975"/>
<path id="p-hark" d="M1288 428Q1335 372 1385 402"/><path id="p-ulz" d="M1267 608Q1276 670 1275 745"/><path id="p-ulz2" d="M1195 1062Q1201 1005 1226 945"/>
<path id="p-tarp" d="M1414 852Q1440 800 1506 763"/>
</g>
<g class="mt">
<text><textPath href="#p-weg">er Weg</textPath></text>
<text><textPath href="#p-wald1">Waldstraße</textPath></text>
<text><textPath href="#p-oadby">Oadby-and-Wigston-Straße</textPath></text>
<text><textPath href="#p-wald2">Waldstraße</textPath></text>
<text><textPath href="#p-rath">Rathausallee</textPath></text>
<text><textPath href="#p-hark">Harckesheyde</textPath></text>
<text><textPath href="#p-ulz">Ulzburger Straße</textPath></text>
<text><textPath href="#p-ulz2">zburger Straße</textPath></text>
<text transform="translate(1032 390) rotate(-90)">Lawaetzst</text>
</g>
<text class="mt mt-river"><textPath href="#p-moor">Moorbek</textPath></text>
<text class="mt mt-river"><textPath href="#p-tarp">Tarpenbek</textPath></text>
<text class="mt mt-area" x="1125" y="321">FRIEDRICHSGABE</text>
<text class="mt mt-area" x="1361" y="959">HARKSHEIDE</text>
<text class="mt mt-city" x="1046" y="841">Norderstedt</text>
<g class="sh"><rect x="1734" y="318" width="44" height="19" rx="2"/><text x="1756" y="332">K 81</text><rect x="1749" y="632" width="51" height="20" rx="2"/><text x="1774" y="647">L 284</text><rect x="1697" y="902" width="51" height="19" rx="2"/><text x="1723" y="916">L 284</text></g>
</svg>
<div class="home-pin d-flex align-items-center justify-content-center"><svg width="24" height="24" viewBox="0 0 24 24" fill="#fff"><path d="M10 20v-6h4v6h5v-8h3L12 3 2 12h3v8z"/></svg></div>
<div class="ctl ctl-zoom">
<button type="button" aria-label="Vergrößern"><svg width="42" height="42" viewBox="0 0 42 42"><path d="M21 14v14M14 21h14" stroke="#333" stroke-width="4" stroke-linecap="round"/></svg></button>
<button type="button" aria-label="Verkleinern"><svg width="42" height="42" viewBox="0 0 42 42"><path d="M14 21h14" stroke="#333" stroke-width="4" stroke-linecap="round"/></svg></button>
<button type="button" aria-label="Nach Norden ausrichten"><svg width="42" height="42" viewBox="0 0 42 42"><path fill="#333" d="M15 20l6-11 6 11z"/><path fill="#ccc" d="M15 23l6 11 6-11z"/></svg></button>
</div>
<div class="ctl ctl-full"><button type="button" aria-label="Vollbild"><svg width="42" height="42" viewBox="0 0 42 42"><g id="fs"><path id="fa" fill="#333" d="M7 9q0-2 2-2h9v3l-3 1 5 5-4 4-5-5-1 3H7z"/><use href="#fa" transform="matrix(-1 0 0 1 42 0)"/></g><use href="#fs" transform="matrix(1 0 0 -1 0 42)"/></svg></button></div>
<div class="credit d-flex align-items-center"><span><a href="#">MapLibre</a> | <a href="#">OpenFreeMap</a> <a href="#">© OpenMapTiles</a> Data from <a href="#">OpenStreetMap</a></span><button type="button" aria-label="Quellenangaben"><svg width="34" height="34" viewBox="0 0 34 34"><circle cx="17" cy="17" r="10.500"/><path d="M15 15.500h3.300v6.500M14.500 22.500h5.500" stroke="#fff" stroke-width="2.500" fill="none"/><circle cx="17" cy="11.500" r="1.800" fill="#fff"/></svg></button></div>
</div>
</section>

<section class="stats d-flex">
<div class="panel stat flex-fill w-25 text-center"><strong>0</strong><span>Hausbesuche</span></div>
<div class="panel stat flex-fill w-25 text-center"><strong>—</strong><span>Erledigt</span><em>verfügbar in Phase 3</em></div>
<div class="panel stat flex-fill w-25 text-center"><strong>0.0 km</strong><span>Gesamtstrecke</span></div>
<div class="panel stat flex-fill w-25 text-center"><strong>0 min</strong><span>Fahrzeit gesamt</span></div>
</section>

<section class="panel route">
<h2>Tagesroute</h2>
<div class="stop d-flex align-items-start">
<div class="stop-ico d-flex align-items-center justify-content-center"><svg class="ico ico-bold" width="26" height="26" viewBox="0 0 24 24"><path d="M1 13L12 2l11 11M4 10.500V22.500h5.500V18c0-1.500 1-2.500 2.500-2.500s2.500 1 2.500 2.500v4.500H20V10.500"/></svg></div>
<div><div class="stop-name">Praxis – Start</div><div class="stop-addr">Grootkoppelstr. 56, 22844 Norderstedt</div></div>
</div>
</section>
</main>
</div>
<script>
// House footprints: small blocks on both sides of every residential lane.
(function(){
  var seed=7;function rnd(){seed=(seed*16807)%2147483647;return seed/2147483647}
  var out='';
  document.querySelectorAll('path.hs').forEach(function(p){
    var m=p.closest('.tile').transform.baseVal.consolidate().matrix;
    function at(d){var q=p.getPointAtLength(d);return[q.x*m.a+m.e,q.y*m.d+m.f]}
    var len=p.getTotalLength();
    for(var d=14;d<len-8;d+=28+rnd()*14){
      var a=at(d-4),b=at(d+4);
      if(Math.hypot(b[0]-a[0],b[1]-a[1])>5)continue;
      var t=Math.atan2(b[1]-a[1],b[0]-a[0]);
      [-1,1].forEach(function(s){
        if(rnd()<.2)return;
        var w=7+rnd()*7,h=3+rnd()*3,o=s*(6+rnd()*4);
        out+='<rect x="'+(-w/2).toFixed(1)+'" y="'+(-h/2).toFixed(1)+'" width="'+w.toFixed(1)+'" height="'+h.toFixed(1)+'" transform="translate('+((a[0]+b[0])/2-Math.sin(t)*o).toFixed(1)+' '+((a[1]+b[1])/2+Math.cos(t)*o).toFixed(1)+') rotate('+(t*57.3+(rnd()<.35?90:0)).toFixed(0)+')"/>';
      });
    }
  });
  document.getElementById('houses').innerHTML=out;
})();
</script>
</body>
</html>
